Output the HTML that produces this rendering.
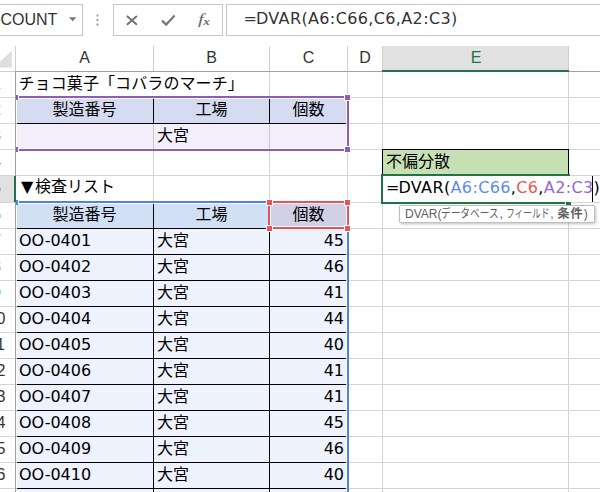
<!DOCTYPE html>
<html lang="ja"><head><meta charset="utf-8"><title>Excel DVAR</title>
<style>
html,body{margin:0;padding:0;background:#fff;}
body{width:600px;height:492px;overflow:hidden;position:relative;font-family:"DejaVu Sans","Noto Sans CJK JP",sans-serif;font-size:16px;color:#000;}
#app{position:absolute;left:0;top:0;width:600px;height:492px;overflow:hidden;background:#fff;}
#app div,#app span.a{position:absolute;box-sizing:border-box;}
.box{border:1px solid #c8c8c8;background:#fff;top:4px;height:32px;}
.ui{font-family:"Liberation Sans","Noto Sans CJK JP",sans-serif;color:#333;}
.hl{background:#d4d4d4;height:1px;}
.vl{background:#d4d4d4;width:1px;}
.bh{background:#000;height:1px;}
.bv{background:#000;width:1px;}
.ch{top:46px;height:25px;line-height:23px;text-align:center;font-size:16px;}
.rh{left:-21.5px;width:36px;text-align:center;font-size:16px;height:26px;line-height:24px;}
.c{height:25px;line-height:25px;white-space:nowrap;font-size:16px;}
.ctr{text-align:center;}
.r{text-align:right;}
.hd{width:5px;height:5px;box-shadow:0 0 0 1px #fff;}
.pu{background:#8e5bc4;}
.bl{background:#4f81ea;}
.rd{background:#e8545c;}
.f1{background:#d5dbf0;}
.f2{background:#f2effa;}
.f3{background:#d2e0f6;}
.f4{background:#edf2fc;}
</style></head><body><div id="app">
<div class="box" style="left:-6px;width:89px;"></div>
<div class="ui" style="left:.5px;top:8px;height:24px;line-height:24px;font-size:16px;">COUNT</div>
<svg style="position:absolute;left:68px;top:16px" width="10" height="6" viewBox="0 0 10 6"><polygon points="1,1.2 8.4,1.2 4.7,5.2" fill="#777"/></svg>
<svg style="position:absolute;left:95px;top:13px" width="5" height="14" viewBox="0 0 5 14"><rect x="1.6" y="1.6" width="1.8" height="1.9" fill="#909090"/><rect x="1.6" y="6.1" width="1.8" height="1.9" fill="#909090"/><rect x="1.6" y="10.6" width="1.8" height="1.9" fill="#909090"/></svg>
<div class="box" style="left:113px;width:110px;"></div>
<svg style="position:absolute;left:124px;top:13px" width="16" height="14" viewBox="0 0 16 14"><path d="M2.9 3 L12.9 11.7 M12.9 3 L2.9 11.7" stroke="#707070" stroke-width="1.8" fill="none"/></svg>
<svg style="position:absolute;left:160px;top:13px" width="17" height="14" viewBox="0 0 17 14"><path d="M2 7.6 L6.2 11.6 L14.6 2.6" stroke="#787878" stroke-width="2.2" fill="none"/></svg>
<svg style="position:absolute;left:190px;top:8px" width="30" height="24" viewBox="0 0 30 24"><text transform="translate(8.1 16.1) scale(1.35 1)" font-family="Liberation Serif, serif" font-style="italic" font-size="15.5" fill="#686868">f</text><text transform="translate(13.2 16.5) scale(1.25 1)" font-family="Liberation Serif, serif" font-style="italic" font-weight="bold" font-size="10.5" fill="#686868">x</text></svg>
<div class="box" style="left:226px;width:380px;"></div>
<div style="left:243.5px;top:6.5px;height:26px;line-height:24px;font-size:16px;color:#333;white-space:nowrap;letter-spacing:.37px;"><span style="margin-right:-1.4px">=</span>DVAR(A6:C66,C6,A2:C3)</div>
<div class="ch ui" style="left:16px;width:137px;">A</div>
<div class="ch ui" style="left:154px;width:115px;">B</div>
<div class="ch ui" style="left:270px;width:77px;">C</div>
<div class="ch ui" style="left:348px;width:34px;">D</div>
<div class="ch ui" style="left:383px;width:185px;padding-left:1px;background:#e1e1e1;color:#217346;">E</div>
<svg style="position:absolute;left:0;top:49px" width="13" height="20" viewBox="0 0 13 20"><polygon points="11.9,1.4 11.9,18.6 0,18.6 0,12.8" fill="#dedede"/></svg>
<div class="vl" style="left:15px;top:46px;height:26px;background:#cfcfcf;"></div>
<div class="vl" style="left:153px;top:46px;height:26px;background:#cfcfcf;"></div>
<div class="vl" style="left:269px;top:46px;height:26px;background:#cfcfcf;"></div>
<div class="vl" style="left:347px;top:46px;height:26px;background:#cfcfcf;"></div>
<div class="vl" style="left:382px;top:46px;height:26px;background:#cfcfcf;"></div>
<div class="vl" style="left:568px;top:46px;height:26px;background:#cfcfcf;"></div>
<div class="hl" style="left:0;top:71px;width:600px;background:#a0a0a0;"></div>
<div class="hl" style="left:0;top:71px;width:15px;background:#d0d0d0;"></div>
<div style="left:382px;top:70px;width:187px;height:2px;background:#217346;"></div>
<div class="hl" style="left:0;top:97px;width:600px;"></div>
<div class="hl" style="left:0;top:123px;width:600px;"></div>
<div class="hl" style="left:0;top:149px;width:600px;"></div>
<div class="hl" style="left:0;top:175px;width:600px;"></div>
<div class="hl" style="left:0;top:202px;width:600px;"></div>
<div class="hl" style="left:0;top:228px;width:600px;"></div>
<div class="hl" style="left:0;top:254px;width:600px;"></div>
<div class="hl" style="left:0;top:280px;width:600px;"></div>
<div class="hl" style="left:0;top:306px;width:600px;"></div>
<div class="hl" style="left:0;top:332px;width:600px;"></div>
<div class="hl" style="left:0;top:358px;width:600px;"></div>
<div class="hl" style="left:0;top:384px;width:600px;"></div>
<div class="hl" style="left:0;top:410px;width:600px;"></div>
<div class="hl" style="left:0;top:436px;width:600px;"></div>
<div class="hl" style="left:0;top:462px;width:600px;"></div>
<div class="hl" style="left:0;top:488px;width:600px;"></div>
<div class="vl" style="left:153px;top:72px;height:420px;"></div>
<div class="vl" style="left:269px;top:72px;height:420px;"></div>
<div class="vl" style="left:347px;top:72px;height:420px;"></div>
<div class="vl" style="left:382px;top:72px;height:420px;"></div>
<div class="vl" style="left:568px;top:72px;height:420px;"></div>
<div style="left:153px;top:72px;width:1px;height:25px;background:#fff;"></div>
<div class="rh ui" style="top:72px;height:25px;line-height:23px;">1</div>
<div class="rh ui" style="top:98px;height:25px;line-height:23px;">2</div>
<div class="rh ui" style="top:124px;height:25px;line-height:23px;">3</div>
<div class="rh ui" style="top:150px;height:25px;line-height:23px;">4</div>
<div class="rh ui" style="top:176px;height:26px;line-height:24px;background:#e1e1e1;color:#217346;">5</div>
<div class="rh ui" style="top:203px;height:25px;line-height:23px;">6</div>
<div class="rh ui" style="top:229px;height:25px;line-height:23px;">7</div>
<div class="rh ui" style="top:255px;height:25px;line-height:23px;">8</div>
<div class="rh ui" style="top:281px;height:25px;line-height:23px;">9</div>
<div class="rh ui" style="top:307px;height:25px;line-height:23px;">10</div>
<div class="rh ui" style="top:333px;height:25px;line-height:23px;">11</div>
<div class="rh ui" style="top:359px;height:25px;line-height:23px;">12</div>
<div class="rh ui" style="top:385px;height:25px;line-height:23px;">13</div>
<div class="rh ui" style="top:411px;height:25px;line-height:23px;">14</div>
<div class="rh ui" style="top:437px;height:25px;line-height:23px;">15</div>
<div class="rh ui" style="top:463px;height:25px;line-height:23px;">16</div>
<div class="rh ui" style="top:489px;height:25px;line-height:23px;">17</div>
<div class="vl" style="left:15px;top:71px;height:421px;background:#a0a0a0;"></div>
<div style="left:14px;top:176px;width:2px;height:26px;background:#217346;"></div>
<div class="c" style="left:18.5px;top:72px;line-height:24px;letter-spacing:.1px;">チョコ菓子「コバラのマーチ」</div>
<div class="f1" style="left:17px;top:99px;width:329px;height:24px;"></div>
<div class="f2" style="left:17px;top:124px;width:329px;height:24px;"></div>
<div class="vl" style="left:153px;top:124px;height:25px;background:#c9c7d2;"></div>
<div class="vl" style="left:269px;top:124px;height:25px;background:#c9c7d2;"></div>
<div class="c ctr" style="left:16px;top:98px;width:137px;height:25px;line-height:24px;">製造番号</div>
<div class="c ctr" style="left:154px;top:98px;width:115px;height:25px;line-height:24px;">工場</div>
<div class="c ctr" style="left:270px;top:98px;width:77px;height:25px;line-height:24px;">個数</div>
<div class="c " style="left:154px;top:124px;width:115px;height:25px;line-height:24px;padding-left:3px;">大宮</div>
<div class="bv" style="left:153px;top:99px;height:25px;"></div>
<div class="bv" style="left:269px;top:99px;height:25px;"></div>
<div class="bh" style="left:17px;top:123px;width:329px;"></div>
<div class="pu" style="left:16px;top:96px;width:333px;height:2px;"></div>
<div class="pu" style="left:16px;top:149px;width:333px;height:2px;"></div>
<div class="pu" style="left:347px;top:96px;width:2px;height:55px;"></div>
<div class="hd pu" style="left:345px;top:95px;"></div>
<div class="hd pu" style="left:345px;top:147px;"></div>
<div class="pu" style="left:16px;top:95px;width:2px;height:5px;box-shadow:1px 0 0 0 #fff;"></div>
<div class="pu" style="left:16px;top:147px;width:2px;height:5px;box-shadow:1px 0 0 0 #fff;"></div>
<div class="c" style="left:19px;top:176px;line-height:21px;height:26px;font-family:'Liberation Sans','Noto Sans CJK JP',sans-serif;"><span style="font-family:'DejaVu Sans',sans-serif;display:inline-block;width:14px;margin-left:2px;">▼</span>検査リスト</div>
<div class="f3" style="left:17px;top:204px;width:329px;height:24px;"></div>
<div class="f4" style="left:17px;top:229px;width:329px;height:263px;"></div>
<div style="left:271px;top:204px;width:76px;height:23px;background:#d1d0e6;"></div>
<div class="c ctr" style="left:16px;top:203px;width:137px;height:25px;line-height:24px;">製造番号</div>
<div class="c ctr" style="left:154px;top:203px;width:115px;height:25px;line-height:24px;">工場</div>
<div class="c ctr" style="left:270px;top:203px;width:77px;height:25px;line-height:24px;">個数</div>
<div class="c " style="left:16px;top:229px;width:137px;height:25px;line-height:24px;padding-left:3px;">OO-0401</div>
<div class="c " style="left:154px;top:229px;width:115px;height:25px;line-height:24px;padding-left:3px;">大宮</div>
<div class="c r" style="left:270px;top:229px;width:77px;height:25px;line-height:24px;padding-right:3px;">45</div>
<div class="c " style="left:16px;top:255px;width:137px;height:25px;line-height:24px;padding-left:3px;">OO-0402</div>
<div class="c " style="left:154px;top:255px;width:115px;height:25px;line-height:24px;padding-left:3px;">大宮</div>
<div class="c r" style="left:270px;top:255px;width:77px;height:25px;line-height:24px;padding-right:3px;">46</div>
<div class="c " style="left:16px;top:281px;width:137px;height:25px;line-height:24px;padding-left:3px;">OO-0403</div>
<div class="c " style="left:154px;top:281px;width:115px;height:25px;line-height:24px;padding-left:3px;">大宮</div>
<div class="c r" style="left:270px;top:281px;width:77px;height:25px;line-height:24px;padding-right:3px;">41</div>
<div class="c " style="left:16px;top:307px;width:137px;height:25px;line-height:24px;padding-left:3px;">OO-0404</div>
<div class="c " style="left:154px;top:307px;width:115px;height:25px;line-height:24px;padding-left:3px;">大宮</div>
<div class="c r" style="left:270px;top:307px;width:77px;height:25px;line-height:24px;padding-right:3px;">44</div>
<div class="c " style="left:16px;top:333px;width:137px;height:25px;line-height:24px;padding-left:3px;">OO-0405</div>
<div class="c " style="left:154px;top:333px;width:115px;height:25px;line-height:24px;padding-left:3px;">大宮</div>
<div class="c r" style="left:270px;top:333px;width:77px;height:25px;line-height:24px;padding-right:3px;">40</div>
<div class="c " style="left:16px;top:359px;width:137px;height:25px;line-height:24px;padding-left:3px;">OO-0406</div>
<div class="c " style="left:154px;top:359px;width:115px;height:25px;line-height:24px;padding-left:3px;">大宮</div>
<div class="c r" style="left:270px;top:359px;width:77px;height:25px;line-height:24px;padding-right:3px;">41</div>
<div class="c " style="left:16px;top:385px;width:137px;height:25px;line-height:24px;padding-left:3px;">OO-0407</div>
<div class="c " style="left:154px;top:385px;width:115px;height:25px;line-height:24px;padding-left:3px;">大宮</div>
<div class="c r" style="left:270px;top:385px;width:77px;height:25px;line-height:24px;padding-right:3px;">41</div>
<div class="c " style="left:16px;top:411px;width:137px;height:25px;line-height:24px;padding-left:3px;">OO-0408</div>
<div class="c " style="left:154px;top:411px;width:115px;height:25px;line-height:24px;padding-left:3px;">大宮</div>
<div class="c r" style="left:270px;top:411px;width:77px;height:25px;line-height:24px;padding-right:3px;">45</div>
<div class="c " style="left:16px;top:437px;width:137px;height:25px;line-height:24px;padding-left:3px;">OO-0409</div>
<div class="c " style="left:154px;top:437px;width:115px;height:25px;line-height:24px;padding-left:3px;">大宮</div>
<div class="c r" style="left:270px;top:437px;width:77px;height:25px;line-height:24px;padding-right:3px;">46</div>
<div class="c " style="left:16px;top:463px;width:137px;height:25px;line-height:24px;padding-left:3px;">OO-0410</div>
<div class="c " style="left:154px;top:463px;width:115px;height:25px;line-height:24px;padding-left:3px;">大宮</div>
<div class="c r" style="left:270px;top:463px;width:77px;height:25px;line-height:24px;padding-right:3px;">40</div>
<div class="bh" style="left:17px;top:228px;width:329px;"></div>
<div class="bh" style="left:17px;top:254px;width:329px;"></div>
<div class="bh" style="left:17px;top:280px;width:329px;"></div>
<div class="bh" style="left:17px;top:306px;width:329px;"></div>
<div class="bh" style="left:17px;top:332px;width:329px;"></div>
<div class="bh" style="left:17px;top:358px;width:329px;"></div>
<div class="bh" style="left:17px;top:384px;width:329px;"></div>
<div class="bh" style="left:17px;top:410px;width:329px;"></div>
<div class="bh" style="left:17px;top:436px;width:329px;"></div>
<div class="bh" style="left:17px;top:462px;width:329px;"></div>
<div class="bh" style="left:17px;top:488px;width:329px;"></div>
<div class="bv" style="left:153px;top:204px;height:288px;"></div>
<div class="bv" style="left:269px;top:204px;height:288px;"></div>
<div class="bl" style="left:16px;top:201px;width:250px;height:2px;"></div>
<div class="bl" style="left:347px;top:231px;width:2px;height:261px;"></div>
<div class="bl" style="left:16px;top:200px;width:2px;height:5px;box-shadow:1px 0 0 0 #fff;"></div>
<div style="left:268px;top:201px;width:81px;height:28px;border:2px solid #e8545c;box-shadow:inset 0 0 0 1px #fff;"></div>
<div class="hd rd" style="left:267px;top:200px;"></div>
<div class="hd rd" style="left:345px;top:200px;"></div>
<div class="hd rd" style="left:267px;top:226px;"></div>
<div class="hd rd" style="left:345px;top:226px;"></div>
<div style="left:382px;top:149px;width:187px;height:27px;background:#c6e0b4;border:1px solid #000;"></div>
<div class="c" style="left:386px;top:150px;line-height:23px;">不偏分散</div>
<div style="left:383px;top:176px;width:217px;height:26px;background:#fff;"></div>
<div style="left:381px;top:174px;width:189px;height:2px;background:#217346;"></div>
<div style="left:381px;top:174px;width:2px;height:30px;background:#217346;"></div>
<div style="left:381px;top:202px;width:184px;height:2px;background:#217346;"></div>
<div style="left:566px;top:202px;width:5px;height:3px;background:#217346;"></div>
<div class="c" style="left:386px;top:176px;height:26px;line-height:23px;letter-spacing:.37px;"><span style="margin-right:-1.4px">=</span>DVAR(<span style="color:#5b8def">A6:C66</span>,<span style="color:#eb5757">C6</span>,<span style="color:#9966cc">A2:C3</span>)</div>
<div style="left:592px;top:176px;width:1px;height:26px;background:#000;"></div>
<div style="left:399px;top:205px;width:196px;height:18px;background:#fff;border:1px solid #bebebe;border-radius:2px;box-shadow:1px 1px 3px rgba(0,0,0,.25);"></div>
<div class="ui" style="left:405px;top:205px;height:18px;line-height:18px;font-size:12px;color:#606060;white-space:nowrap;">DVAR(<span class="k" style="display:inline-block;width:58px;height:18px;vertical-align:top;"><span style="display:inline-block;transform:scaleX(.806);transform-origin:0 50%;">データベース</span></span>, <span class="k" style="display:inline-block;width:44px;height:18px;vertical-align:top;"><span style="display:inline-block;transform:scaleX(.73);transform-origin:0 50%;">フィールド</span></span>, <b style="letter-spacing:1.2px;margin-left:.6px">条件</b>)</div>
</div></body></html>
